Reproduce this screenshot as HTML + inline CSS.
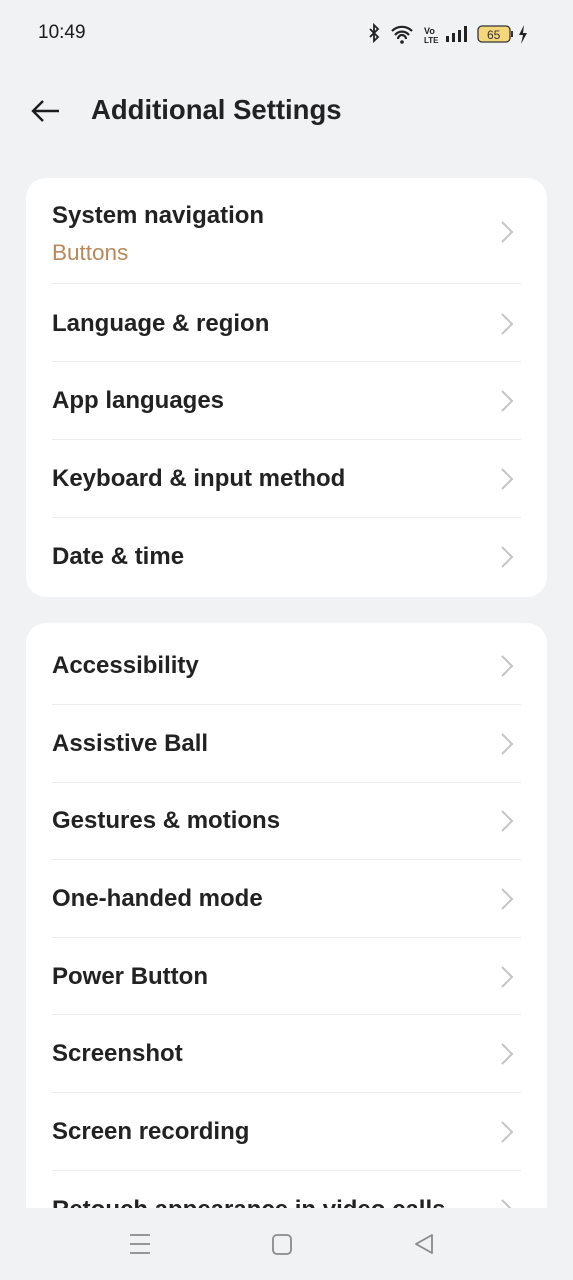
<!DOCTYPE html>
<html><head><meta charset="utf-8"><style>
*{margin:0;padding:0;box-sizing:border-box}
body{width:573px;height:1280px;background:#f1f2f4;font-family:"Liberation Sans",sans-serif;position:relative;overflow:hidden;color:#1c1c1c}
.abs{position:absolute}
.card{position:absolute;left:26px;width:521px;background:#fff;border-radius:20px}
.t{position:absolute;left:52px;font-size:24px;font-weight:bold;line-height:28px;transform:translateY(-50%);white-space:nowrap;color:#222}
.sep{position:absolute;left:52px;width:469px;height:1px;background:#ececec}
</style></head><body>
<div class="abs" style="left:38px;top:22px;font-size:19px">10:49</div>
<svg class="abs" style="left:366px;top:22px" width="170" height="24" viewBox="0 0 170 24">
<path d="M4 7l8 8-4 4V3l4 4-8 8" fill="none" stroke="#222" stroke-width="1.8"/>
<path d="M26 9a14 14 0 0 1 20 0M29 13a9 9 0 0 1 14 0M32 17a4 4 0 0 1 8 0" fill="none" stroke="#222" stroke-width="2.2"/>
<circle cx="36" cy="20" r="1.8" fill="#222"/>
<text x="58" y="12" font-size="9" font-weight="bold" font-family="Liberation Sans" fill="#222">Vo</text>
<text x="58" y="21" font-size="8" font-weight="bold" font-family="Liberation Sans" fill="#222">LTE</text>
<rect x="80" y="14" width="3" height="6" fill="#222"/><rect x="86" y="11" width="3" height="9" fill="#222"/><rect x="92" y="8" width="3" height="12" fill="#222"/><rect x="98" y="4" width="3" height="16" fill="#222"/>
<rect x="112" y="4" width="32" height="16" rx="4" fill="#f5d77a" stroke="#333" stroke-width="1.3"/>
<rect x="145" y="9" width="2" height="6" fill="#333"/>
<text x="121" y="17" font-size="12" font-family="Liberation Sans" fill="#333">65</text>
<path d="M158 3l-5 10h4l-2 9 6-11h-4z" fill="#222"/>
</svg>
<svg class="abs" style="left:30px;top:98px" width="32" height="26"><path d="M3 13h26M13 3L3 13l10 10" fill="none" stroke="#1c1c1c" stroke-width="2.4"/></svg>
<div class="abs" style="left:91px;top:94px;font-size:27.5px;font-weight:bold;color:#222">Additional Settings</div>

<div class="card" style="top:178px;height:419px"></div>
<div class="card" style="top:623px;height:600px;border-radius:20px 20px 0 0"></div>

<div class="t" style="top:216px">System navigation</div>
<div class="t" style="top:253px;font-size:22.5px;font-weight:normal;color:#b9885a">Buttons</div>
<div class="sep" style="top:283px"></div>
<div class="t" style="top:324px">Language &amp; region</div>
<div class="sep" style="top:361px"></div>
<div class="t" style="top:401px">App languages</div>
<div class="sep" style="top:439px"></div>
<div class="t" style="top:479px">Keyboard &amp; input method</div>
<div class="sep" style="top:517px"></div>
<div class="t" style="top:557px">Date &amp; time</div>

<div class="t" style="top:666px">Accessibility</div>
<div class="sep" style="top:704px"></div>
<div class="t" style="top:744px">Assistive Ball</div>
<div class="sep" style="top:782px"></div>
<div class="t" style="top:821px">Gestures &amp; motions</div>
<div class="sep" style="top:859px"></div>
<div class="t" style="top:899px">One-handed mode</div>
<div class="sep" style="top:937px"></div>
<div class="t" style="top:977px">Power Button</div>
<div class="sep" style="top:1014px"></div>
<div class="t" style="top:1054px">Screenshot</div>
<div class="sep" style="top:1092px"></div>
<div class="t" style="top:1132px">Screen recording</div>
<div class="sep" style="top:1170px"></div>
<div class="t" style="top:1210px">Retouch appearance in video calls</div>

<svg class="abs" style="left:0;top:0" width="573" height="1280">
<g fill="none" stroke="#c4c4c4" stroke-width="2">
<path d="M502 222l10 10-10 10"/><path d="M502 314l10 10-10 10"/><path d="M502 391l10 10-10 10"/><path d="M502 469l10 10-10 10"/><path d="M502 547l10 10-10 10"/>
<path d="M502 656l10 10-10 10"/><path d="M502 734l10 10-10 10"/><path d="M502 811l10 10-10 10"/><path d="M502 889l10 10-10 10"/><path d="M502 967l10 10-10 10"/><path d="M502 1044l10 10-10 10"/><path d="M502 1122l10 10-10 10"/><path d="M502 1200l10 10-10 10"/>
</g></svg>
<div class="abs" style="left:0;top:1208px;width:573px;height:72px;background:#f1f2f4"></div>
<svg class="abs" style="left:0;top:1208px" width="573" height="72">
<g fill="none" stroke="#8a8a8a" stroke-width="1.8">
<path d="M130 27h20M130 36h20M130 45h20"/>
<rect x="273" y="27" width="18" height="19" rx="4"/>
<path d="M432 27l-16 9 16 9z" stroke-linejoin="round"/>
</g></svg>
</body></html>
